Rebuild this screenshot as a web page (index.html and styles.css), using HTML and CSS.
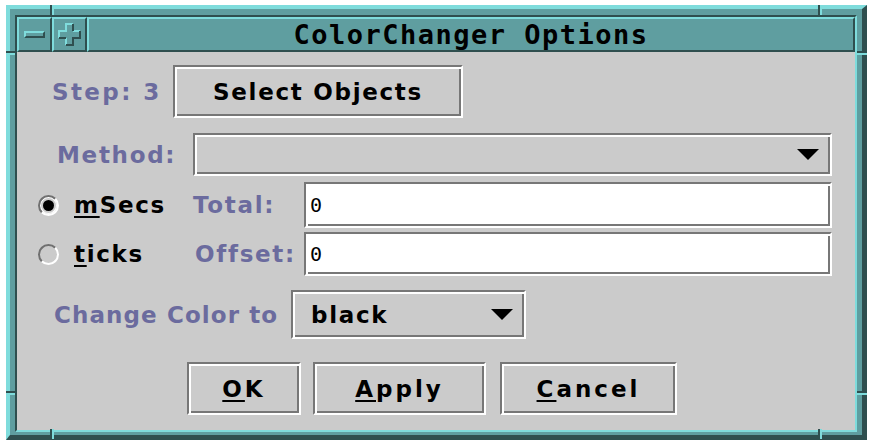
FILE: index.html
```html
<!DOCTYPE html>
<html>
<head>
<meta charset="utf-8">
<link rel="stylesheet" href="styles.css">
</head>
<body>
<div class="window">
  <span class="mark mark-v mark-tl"></span>
  <span class="mark mark-v mark-tr"></span>
  <span class="mark mark-v mark-bl"></span>
  <span class="mark mark-v mark-br"></span>
  <span class="mark mark-h mark-lt"></span>
  <span class="mark mark-h mark-rt"></span>
  <span class="mark mark-h mark-lb"></span>
  <span class="mark mark-h mark-rb"></span>
  <div class="inner">
    <div class="titlebar">
      <div class="tb-btn"><span class="minus"></span></div>
      <div class="tb-btn">
        <svg class="plus" width="23" height="23" viewBox="-1 -1 23 23">
          <polygon points="7,0 14,0 14,7 21,7 21,14 14,14 14,21 7,21 7,14 0,14 0,7 7,7" fill="#5f9ea0"/>
          <path d="M0,14 V7 H7 V0 H14 M14,7 H21 M7,14 V21" fill="none" stroke="#7fdcdc" stroke-width="2"/>
          <path d="M14,0 V7 M21,7 V14 H14 V21 H7 M0,14 H7" fill="none" stroke="#2f4f4f" stroke-width="2"/>
        </svg>
      </div>
      <div class="tb-title">ColorChanger Options</div>
    </div>
    <div class="content">
      <div class="row row-step">
        <span class="label label-step">Step: 3</span>
        <div class="groove btn btn-select">Select Objects</div>
      </div>
      <div class="row row-method">
        <span class="label label-method">Method:</span>
        <div class="groove combo combo-method">
          <svg class="arrow" width="22" height="11" viewBox="0 0 22 11"><polygon points="0,0 22,0 11,11" fill="#000"/></svg>
        </div>
      </div>
      <div class="row row-total">
        <div class="radio-cell">
          <span class="radio radio-on"><span class="dot"></span></span>
          <span class="radio-text"><u>m</u>Secs</span>
        </div>
        <span class="label label-total">Total:</span>
        <div class="groove field field-total">0</div>
      </div>
      <div class="row row-offset">
        <div class="radio-cell">
          <span class="radio radio-off"></span>
          <span class="radio-text"><u>t</u>icks</span>
        </div>
        <span class="label label-offset">Offset:</span>
        <div class="groove field field-offset">0</div>
      </div>
      <div class="row row-color">
        <span class="label label-color">Change Color to</span>
        <div class="groove combo combo-color">
          <span class="combo-text">black</span>
          <svg class="arrow" width="22" height="11" viewBox="0 0 22 11"><polygon points="0,0 22,0 11,11" fill="#000"/></svg>
        </div>
      </div>
      <div class="row row-buttons">
        <div class="groove btn btn-ok"><u>O</u>K</div>
        <div class="groove btn btn-apply"><u>A</u>pply</div>
        <div class="groove btn btn-cancel"><u>C</u>ancel</div>
      </div>
    </div>
  </div>
</div>
</body>
</html>
```

FILE: styles.css
```css
html, body {
  margin: 0;
  padding: 0;
  background: #ffffff;
}

.window {
  position: relative;
  box-sizing: border-box;
  width: 861px;
  height: 435px;
  margin: 5px 0 0 6px;
  background: #5f9ea0;
  border-style: solid;
  border-width: 4px 5px 5px 4px;
  border-color: #7fdcdc #2f4f4f #2f4f4f #7fdcdc;
  padding: 6px 5px 3px 5px;
}

.mark {
  position: absolute;
  display: block;
}
.mark-v {
  width: 2px;
  height: 10px;
  background: #2f4f4f;
  border-right: 2px solid #7fdcdc;
}
.mark-h {
  width: 9px;
  height: 2px;
  background: #2f4f4f;
  border-bottom: 2px solid #7fdcdc;
}
.mark-tl { left: 40px; top: -4px; }
.mark-tr { left: 808px; top: -4px; }
.mark-bl { left: 40px; top: 420px; }
.mark-br { left: 808px; top: 420px; }
.mark-lt { left: -4px; top: 42px; }
.mark-rt { left: 847px; top: 42px; width: 10px; }
.mark-lb { left: -4px; top: 382px; }
.mark-rb { left: 847px; top: 382px; width: 10px; }

.inner {
  box-sizing: border-box;
  height: 100%;
  display: flex;
  flex-direction: column;
  border-style: solid;
  border-width: 2px;
  border-color: #2f4f4f #7fdcdc #7fdcdc #2f4f4f;
}

.titlebar {
  display: flex;
  height: 35px;
  flex: none;
}
.tb-btn, .tb-title {
  box-sizing: border-box;
  height: 35px;
  background: #5f9ea0;
  border-style: solid;
  border-width: 2px;
  border-color: #7fdcdc #2f4f4f #2f4f4f #7fdcdc;
}
.tb-btn {
  width: 35px;
  flex: none;
  display: flex;
  align-items: center;
  justify-content: center;
}
.minus {
  display: block;
  box-sizing: border-box;
  width: 21px;
  height: 7px;
  border-style: solid;
  border-width: 2px;
  border-color: #7fdcdc #2f4f4f #2f4f4f #7fdcdc;
}
.plus { display: block; }
.tb-title {
  flex: 1;
  display: flex;
  align-items: center;
  justify-content: center;
  font-family: "DejaVu Sans Mono", monospace;
  font-weight: bold;
  font-size: 27px;
  letter-spacing: 1.5px;
  color: #000;
}

.content {
  flex: 1;
  background: #cbcbcb;
  font-family: "DejaVu Sans", sans-serif;
  font-weight: bold;
  font-size: 23px;
  letter-spacing: 1.7px;
}

.row {
  display: flex;
  align-items: center;
}

.label {
  color: #6b6b9e;
  box-sizing: border-box;
  flex: none;
  white-space: nowrap;
}

.groove {
  box-sizing: border-box;
  border-style: solid;
  border-width: 2px;
  border-color: #777777 #ffffff #ffffff #777777;
  box-shadow: inset 2px 2px 0 #ffffff, inset -2px -2px 0 #777777;
  flex: none;
}

.btn {
  display: flex;
  align-items: center;
  justify-content: center;
  color: #000;
  height: 53px;
}
.btn u, .radio-text u {
  text-decoration-thickness: 2px;
  text-underline-offset: 3px;
}

.row-step { margin-top: 13px; }
.label-step { width: 156px; padding-left: 35px; letter-spacing: 2.4px; }
.btn-select { width: 290px; }

.row-method { margin-top: 15px; }
.label-method { width: 176px; padding-left: 40px; }
.combo {
  display: flex;
  align-items: center;
  justify-content: space-between;
  padding: 0 11px 0 18px;
}
.combo-method { width: 639px; height: 43px; justify-content: flex-end; }
.arrow { display: block; flex: none; }

.row-total { margin-top: 6px; }
.row-offset { margin-top: 4px; }
.radio-cell {
  box-sizing: border-box;
  width: 176px;
  padding-left: 21px;
  display: flex;
  align-items: center;
  flex: none;
}
.radio {
  box-sizing: border-box;
  width: 21px;
  height: 21px;
  border-radius: 50%;
  display: flex;
  align-items: center;
  justify-content: center;
  flex: none;
  margin-right: 15px;
  border: 2px solid #707070;
  border-bottom-color: #ffffff;
  border-right-color: #ffffff;
}
.radio-on {
  box-shadow: inset 0 0 0 1px #ffffff;
}
.radio-on .dot {
  width: 11px;
  height: 11px;
  border-radius: 50%;
  background: #000;
}
.radio-text { color: #000; }
.label-total { width: 111px; }
.label-offset { width: 111px; padding-left: 2px; }
.field {
  width: 528px;
  background: #ffffff;
  display: flex;
  align-items: center;
  padding-left: 4px;
  font-family: "DejaVu Sans Mono", monospace;
  font-weight: normal;
  font-size: 20px;
  letter-spacing: 0;
  color: #000;
}
.field-total { height: 46px; }
.field-offset { height: 44px; }

.row-color { margin-top: 14px; }
.label-color { width: 274px; padding-left: 37px; letter-spacing: 1.1px; }
.combo-color { width: 235px; height: 49px; }
.combo-text { color: #000; }

.row-buttons { margin-top: 23px; padding-left: 170px; }
.row-buttons .btn { letter-spacing: 3px; }
.btn-ok { width: 114px; }
.btn-apply { width: 173px; margin-left: 12px; }
.btn-cancel { width: 177px; margin-left: 14px; }
```
